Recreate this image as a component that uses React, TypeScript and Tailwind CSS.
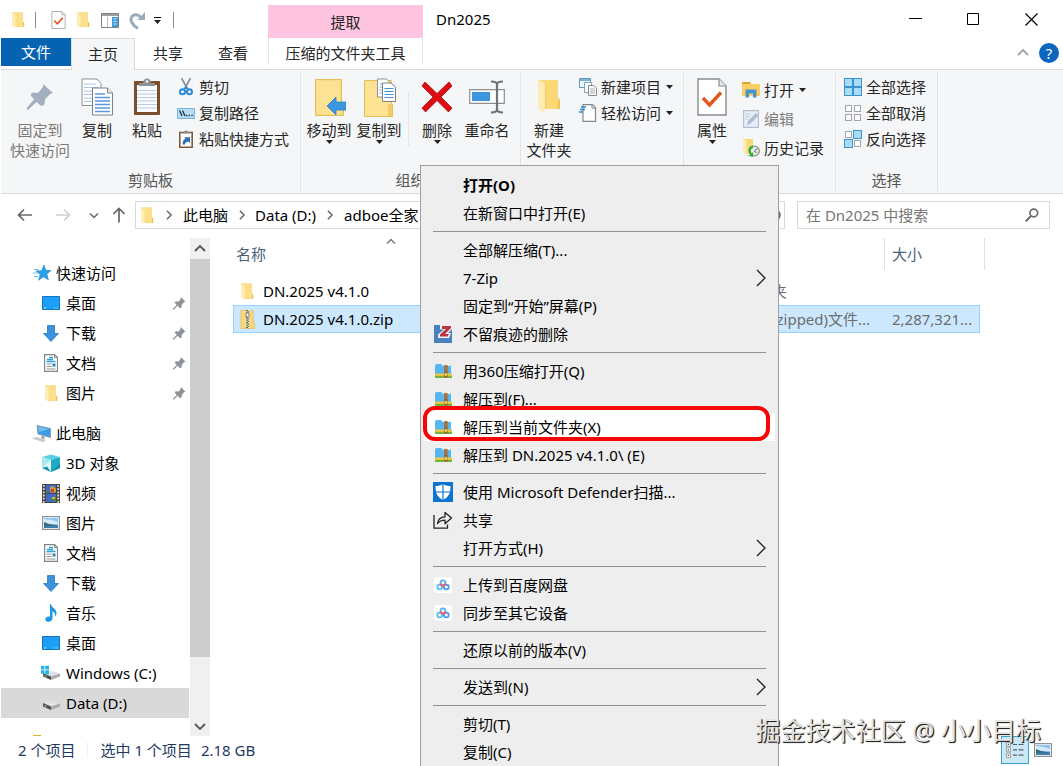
import type { ReactNode } from "react";

/* ---------- icons ---------- */

function Folder({ className }: { className: string }) {
  return (
    <svg viewBox="0 0 14 17" className={className} preserveAspectRatio="none" aria-hidden="true">
      <path d="M1 .5h11v10.5h1v5H4L1 14z" fill="#f6cf68" />
      <path d="M3 .8h9v10h1v5H4z" fill="#fbdf8b" />
      <path d="M1 .5l3.600 2.400V17L1 14z" fill="#fdeeb8" />
      <path d="M12 11h1.200v5H12z" fill="#eebf50" />
    </svg>
  );
}

function NewFolderBig() {
  return (
    <svg viewBox="0 0 24 36" className="h-9 w-6" aria-hidden="true">
      <path d="M1 1h20v20h2v9H7z" fill="#fad876" />
      <path d="M21 21l2-2v11h-3z" fill="#f0c659" />
      <path d="M1 1l7 3v31l-7-6z" fill="#feecb4" />
      <path d="M8 4h1v26H8z" fill="#f2cd6a" />
    </svg>
  );
}

function CheckPage({ className }: { className: string }) {
  return (
    <svg viewBox="0 0 30 38" className={className} aria-hidden="true">
      <path d="M1 1h21l7 7v29H1z" fill="#fff" stroke="#8a8d91" strokeWidth="1.400" />
      <path d="M22 1v7h7" fill="#e6e8ea" stroke="#8a8d91" strokeWidth="1.200" />
      <path d="M6 20l6.500 7L24 14.500" fill="none" stroke="#e2571e" strokeWidth="3.400" />
    </svg>
  );
}

function PaneIcon() {
  return (
    <svg viewBox="0 0 18 15" className="h-[15px] w-[18px]" aria-hidden="true">
      <path d="M.5.5h17v14H.5z" fill="#fff" stroke="#7b8085" />
      <path d="M1 1h16v2H1z" fill="#9aa0a6" />
      <path d="M11 4h6v10h-6z" fill="#3f9bdc" />
      <path d="M12.500 6h3M12.500 8.500h3M12.500 11h3" stroke="#d6ecfb" />
      <path d="M6.500 4v10" stroke="#b9bdc1" />
    </svg>
  );
}

function RedoIcon() {
  return (
    <svg viewBox="0 0 17 19" className="h-[19px] w-[17px]" aria-hidden="true">
      <path d="M9 17.500C3 14 .5 9 3 5.500 5 3 9.500 3 12.500 7" fill="none" stroke="#9aabbd" strokeWidth="3" />
      <path d="M16 1v8H8.500z" fill="#9aabbd" />
    </svg>
  );
}

function PinBig() {
  return (
    <svg viewBox="0 0 28 28" className="h-7 w-7" aria-hidden="true">
      <path d="M17 1l10 9-3 1-5 5.500-.5 5L15 23l-4.500-4L2 27l-1.500-.5 1-2.500L8 16.500 4.500 12l2-2.500 5.500.5 5-6z" fill="#a3afc1" />
    </svg>
  );
}

function PinSmall() {
  return (
    <svg viewBox="0 0 28 28" className="h-[13px] w-[13px]" aria-hidden="true">
      <path d="M17 0l10 10-3 1-5 5.500-.5 6L15 24l-5-5-8 8-2 0 0-2L8 17 3.500 12l2.500-3 6.500.5 4-5.500z" fill="#8d9398" />
    </svg>
  );
}

function CopyIcon() {
  return (
    <svg viewBox="0 0 32 38" className="h-[38px] w-8" aria-hidden="true">
      <path d="M1 1h15l4 4.500v22H1z" fill="#fff" stroke="#8e9196" />
      <path d="M3 6h12M3 9.500h14M3 13h14M3 16.500h14M3 20h14M3 23.500h14" stroke="#a9c6ea" />
      <path d="M11.500 10h15l5 5v22h-20z" fill="#fff" stroke="#7e8287" />
      <path d="M26.500 10v5h5" fill="#e4e6e8" stroke="#7e8287" />
      <path d="M14 16h10M14 19.500h15M14 23h15M14 26.500h15M14 30h15M14 33.500h15" stroke="#5b98de" strokeWidth="1.300" />
    </svg>
  );
}

function PasteIcon() {
  return (
    <svg viewBox="0 0 28 38" className="h-[38px] w-7" aria-hidden="true">
      <rect x="1" y="3" width="26" height="34" rx="1" fill="#7b4f2c" />
      <path d="M4 7h20v27H4z" fill="#fafcff" />
      <path d="M4 12.500h20M4 16h20M4 19.500h20M4 23h20M4 26.500h20M4 30h20" stroke="#b7cfe3" />
      <path d="M6 8V5h4c0-6 8-6 8 0h4v3z" fill="#8d9094" />
      <circle cx="14" cy="3.500" r="1.300" fill="#f5f6f7" />
    </svg>
  );
}

function ScissorsIcon() {
  return (
    <svg viewBox="0 0 14 18" className="h-[18px] w-[14px]" aria-hidden="true">
      <path d="M2.500 0l6 11M11.500 0l-6 11" stroke="#8a8f94" strokeWidth="1.600" />
      <circle cx="3.500" cy="13.800" r="2.500" fill="none" stroke="#2a8ad6" strokeWidth="2" />
      <circle cx="10.500" cy="13.800" r="2.500" fill="none" stroke="#2a8ad6" strokeWidth="2" />
      <path d="M5 11.500l2-2.500 2 2.500" fill="none" stroke="#2a8ad6" strokeWidth="1.600" />
    </svg>
  );
}

function PathIcon() {
  return (
    <svg viewBox="0 0 18 11" className="h-[11px] w-[18px]" aria-hidden="true">
      <path d="M.5.5h17v10H.5z" fill="#b9dcf5" stroke="#7db4df" />
      <path d="M2.500 2.500l2.500 5.500M5.500 2.500L8 8" stroke="#16324a" strokeWidth="1.300" />
      <path d="M9 7.500h1.300M11.700 7.500H13M14.400 7.500h1.300" stroke="#16324a" strokeWidth="1.400" />
    </svg>
  );
}

function PasteShortcutIcon() {
  return (
    <svg viewBox="0 0 14 18" className="h-[18px] w-[14px]" aria-hidden="true">
      <path d="M.8 2.500h12.400v14.700H.8z" fill="#fff" stroke="#80583a" strokeWidth="1.600" />
      <path d="M4 3.500C4-.5 10-.5 10 3.500z" fill="#8d9094" />
      <path d="M3.500 14.500c0-3 1-5 3-5.700L5 7.300h6v6l-1.700-1.700c-2 .4-3.300 1.200-3.300 2.900z" fill="#2d6fb9" />
    </svg>
  );
}

function MoveToIcon() {
  return (
    <svg viewBox="0 0 34 38" className="h-[38px] w-[34px]" aria-hidden="true">
      <path d="M3.500 1.500h26v24h2v12h-28z" fill="#f9dc81" stroke="#e3bf58" />
      <path d="M5 3h23v33H5z" fill="#fce292" />
      <path d="M15 28l9-9v5h10v8H24v5z" fill="#3b98e0" stroke="#2a80c5" strokeWidth=".8" />
    </svg>
  );
}

function CopyToIcon() {
  return (
    <svg viewBox="0 0 34 39" className="h-[39px] w-[34px]" aria-hidden="true">
      <path d="M2.500 2.500h27v24h1v12h-28z" fill="#fce292" stroke="#e3bf58" />
      <path d="M26 26h4v12h-4z" fill="#f3cb63" />
      <path d="M15.500 1h9l3 3v15h-12z" fill="#fff" stroke="#8e9196" />
      <path d="M17.500 6h8M17.500 9h8M17.500 12h8M17.500 15h8" stroke="#7fb0e6" />
      <path d="M20.500 5h8.500l4.500 4v14.500h-13z" fill="#fff" stroke="#7e8287" />
      <path d="M22.500 10.500h9M22.500 13.500h9M22.500 16.500h9M22.500 19.500h9" stroke="#4a8fda" />
    </svg>
  );
}

function DeleteIcon() {
  return (
    <svg viewBox="0 0 32 32" className="h-8 w-8" aria-hidden="true">
      <path d="M4 1l12 11.500L28 1l3 4-11 11 11 11-3.500 4L16 19.500 4.500 31 1 27l11-11L1 5z" fill="#dc0c14" stroke="#b50a10" strokeWidth=".8" />
    </svg>
  );
}

function RenameIcon() {
  return (
    <svg viewBox="0 0 36 34" className="h-[34px] w-9" aria-hidden="true">
      <path d="M.7 9.700h34.600v13.600H.7z" fill="#fff" stroke="#8b8e92" strokeWidth="1.200" />
      <path d="M3 12h18v9H3z" fill="#3a97df" />
      <path d="M22 1.500c4 0 6 1 6 3v25c0 2-2 3-6 3M34 1.500c-4 0-6 1-6 3M28 29.500c0 2 2 3 6 3" fill="none" stroke="#6f7275" strokeWidth="2.200" />
    </svg>
  );
}

function NewItemIcon() {
  return (
    <svg viewBox="0 0 18 18" className="h-[18px] w-[18px]" aria-hidden="true">
      <path d="M.5.5h11v9H.5z" fill="#e8f3fb" stroke="#5b9bc0" />
      <path d="M.5 2h11" stroke="#5b9bc0" strokeWidth="1.500" />
      <path d="M5.500 4.500h7v10h-7z" fill="#f7fbfd" stroke="#8aa2b2" />
      <path d="M9.500 7.500h5l3 2.500v7.500h-8z" fill="#fff" stroke="#85898d" />
      <path d="M11 11h5M11 13h5M11 15h5" stroke="#a5a9ad" />
    </svg>
  );
}

function EasyAccessIcon() {
  return (
    <svg viewBox="0 0 18 18" className="h-[18px] w-[18px]" aria-hidden="true">
      <path d="M4 .7h9.500l3 3v13.600H4z" fill="#fff" stroke="#85898d" strokeWidth="1.200" />
      <path d="M13 .7v3.500h3.500" fill="none" stroke="#85898d" />
      <path d="M2 3h5M1 5.500h5M0 8h4" stroke="#2f88c9" strokeWidth="1.300" />
    </svg>
  );
}

function OpenIcon() {
  return (
    <svg viewBox="0 0 18 17" className="h-[17px] w-[18px]" aria-hidden="true">
      <path d="M0 1h8l1 2h9v12H0z" fill="#f7cf64" />
      <path d="M0 1h8l1 2H0z" fill="#dba52f" />
      <path d="M3.500 16.500V8.500h11v8h-3.500v-4h-4v4z" fill="#4b93cc" />
    </svg>
  );
}

function EditIcon() {
  return (
    <svg viewBox="0 0 16 18" className="h-[18px] w-4" aria-hidden="true">
      <path d="M.6.6h14.800v16.800H.6z" fill="#e6eff9" stroke="#b4bfce" strokeWidth="1.200" />
      <path d="M4 15l1-4L13 3l2.500 2.500-8 8z" fill="#aebccf" />
      <path d="M2.500 4h5M2.500 6.500h4M2.500 9h3" stroke="#bccadb" />
    </svg>
  );
}

function HistoryIcon() {
  return (
    <svg viewBox="0 0 17 18" className="h-[18px] w-[17px]" aria-hidden="true">
      <path d="M0 0h10v15H2L0 13z" fill="#f7d778" />
      <path d="M0 0l3.500 2v14L0 13z" fill="#fdeeb8" />
      <circle cx="11.500" cy="12" r="4.800" fill="#e5ebe5" stroke="#8a928a" strokeWidth="1.300" />
      <path d="M11.500 12l3-2.500M11.500 12l2 2" stroke="#596059" />
      <path d="M10 6.500C5 7 4 12 7.500 16l-3 .5 5.500 1.500V13l-1.300 1.500C7 12 7.500 9.500 10 9z" fill="#2fa836" />
    </svg>
  );
}

const squareSpots = [
  [0.5, 0.5],
  [9.5, 0.5],
  [0.5, 9.5],
  [9.5, 9.5],
];

function SquaresIcon({ filled }: { filled: boolean[] }) {
  return (
    <svg viewBox="0 0 18 18" className="h-[18px] w-[18px]" aria-hidden="true">
      {squareSpots.map(([x, y], i) =>
        filled[i] ? (
          <rect key={i} x={x} y={y} width="8" height="8" fill="#a9dcfa" stroke="#3b94cf" />
        ) : (
          <rect key={i} x={x + 1} y={y + 1} width="6" height="6" fill="#fdfdfd" stroke="#a2a6aa" />
        ),
      )}
    </svg>
  );
}

function Chevron({ dir, className }: { dir: "up" | "down" | "right"; className: string }) {
  const d = { up: "M1 7l5-5 5 5", down: "M1 3l5 5 5-5", right: "M3 1l5 5-5 5" }[dir];
  return (
    <svg viewBox={dir === "right" ? "0 0 11 12" : "0 0 12 10"} className={className} aria-hidden="true">
      <path d={d} fill="none" stroke="currentColor" strokeWidth="1.800" />
    </svg>
  );
}

function Caret() {
  return (
    <svg viewBox="0 0 7 4" className="h-1 w-[7px] shrink-0" aria-hidden="true">
      <path d="M0 0h7L3.500 4z" fill="#222" />
    </svg>
  );
}

function Arrow({ dir, className }: { dir: "left" | "right" | "up"; className: string }) {
  const d = {
    left: "M15 8H1.500M7 2.500L1.500 8 7 13.500",
    right: "M1 8h13.500M9 2.500l5.500 5.500L9 13.500",
    up: "M8 15.500V1.500M2.500 7L8 1.500 13.500 7",
  }[dir];
  return (
    <svg viewBox="0 0 16 16" className={className} aria-hidden="true">
      <path d={d} fill="none" stroke="currentColor" strokeWidth="1.700" />
    </svg>
  );
}

function StarIcon() {
  return (
    <svg viewBox="0 0 18 16" className="h-4 w-[18px]" aria-hidden="true">
      <path d="M11 0l1.800 5.200 5.200.3-4.200 3.500 1.600 5.800-4.900-3-5 3.500 1.800-5.800L3 6l5.500-.3z" fill="#29a3ee" stroke="#1b7fc4" strokeWidth=".6" />
      <path d="M1 4.500h5M0 8h5M1 11.500h4" stroke="#6fbdec" strokeWidth="1.200" />
    </svg>
  );
}

function DesktopIcon() {
  return (
    <svg viewBox="0 0 18 14" className="h-[14px] w-[18px]" aria-hidden="true">
      <path d="M.5.5h17v13H.5z" fill="#1b9ff7" stroke="#1675b8" />
      <path d="M2 12h2M12 12h1M14.500 12h1" stroke="#d9f0ff" />
    </svg>
  );
}

function DownloadIcon() {
  return (
    <svg viewBox="0 0 16 17" className="h-[17px] w-4" aria-hidden="true">
      <path d="M4.500.5h7v8h4L8 16.500.5 8.500h4z" fill="#3a93dc" stroke="#2877ba" strokeWidth=".8" />
    </svg>
  );
}

function DocIcon() {
  return (
    <svg viewBox="0 0 14 18" className="h-[18px] w-[14px]" aria-hidden="true">
      <path d="M.6.6h9.900l3 3v13.800H.6z" fill="#fff" stroke="#7f858a" strokeWidth="1.200" />
      <path d="M10.500.6v3h3" fill="none" stroke="#7f858a" />
      <path d="M5 3.500h4M3 5.500h6M2.500 7.500h9" stroke="#31a0d4" strokeWidth="1.400" />
      <path d="M2.500 10h5M2.500 12.500h5M2.500 15h9" stroke="#8d9499" />
      <path d="M8.500 9.500h3v3h-3z" fill="#2f83ad" />
    </svg>
  );
}

function PcIcon() {
  return (
    <svg viewBox="0 0 19 17" className="h-[17px] w-[19px]" aria-hidden="true">
      <path d="M5 .5l13.500 3v9L6 9z" fill="#3d9be3" stroke="#8398a8" strokeWidth=".9" />
      <path d="M6 1.500L17 4l-10 3z" fill="#70bcf2" />
      <path d="M10 11l3 1-1 2-3-1z" fill="#8e9499" />
      <path d="M0 13.500l4-1.500 10 3-3 2z" fill="#c5c9cc" />
    </svg>
  );
}

function CubeIcon() {
  return (
    <svg viewBox="0 0 18 18" className="h-[18px] w-[18px]" aria-hidden="true">
      <path d="M9 .5l9 2.500-9 3-9-3z" fill="#59cfe2" />
      <path d="M0 3l9 3v12l-9-4z" fill="#a8e8f0" />
      <path d="M18 3L9 6v12l9-4z" fill="#22a9c8" />
      <path d="M0 14l9-8v12z" fill="#dcf8fb" />
      <path d="M9 18l9-8v4z" fill="#1386ab" />
      <path d="M0 14l5-1.500L9 18z" fill="#178fa4" />
    </svg>
  );
}

function VideoIcon() {
  return (
    <svg viewBox="0 0 18 19" className="h-[19px] w-[18px]" aria-hidden="true">
      <path d="M0 0h18v19H0z" fill="#4b4540" />
      <path d="M1.800 1v18M16.200 1v18" stroke="#dcdcdc" strokeWidth="1.800" strokeDasharray="1.800 1.400" />
      <path d="M4 1h10v8H4zM4 10h10v8H4z" fill="#4469ce" />
      <path d="M8 3l3-1 3 3v3l-4 1-2-2z" fill="#d39c35" />
      <path d="M9 5h3v3H9z" fill="#cc402f" />
      <path d="M4 7l4 2H4zM9 15l5-3v5h-4z" fill="#3c8b3a" />
      <path d="M10 13h3v2h-3z" fill="#e3b13d" />
    </svg>
  );
}

function PictureIcon() {
  return (
    <svg viewBox="0 0 18 14" className="h-[14px] w-[18px]" aria-hidden="true">
      <path d="M.6.6h16.800v12.800H.6z" fill="#fff" stroke="#8d9398" strokeWidth="1.200" />
      <path d="M2 2h14v10H2z" fill="#8fc6f1" />
      <path d="M2 3l8 1 6 2v2H2z" fill="#d4eafa" />
      <path d="M2 6l5 2 9 1.500V12H2z" fill="#316e73" />
      <path d="M2 10l7-.5 7 .5v2H2z" fill="#3f7fb0" />
    </svg>
  );
}

function MusicIcon() {
  return (
    <svg viewBox="0 0 12 18" className="h-[18px] w-3" aria-hidden="true">
      <path d="M6 0c.5 4 5.500 4.500 5.500 9 0 2-1 3-1.500 3.500C10.500 9 9 8 7.500 7.500V14c0 2.500-2 3.800-4 3.800S.3 16.700.3 15.200c0-2 2.200-3.200 4.700-2.700V0z" fill="#1f97e4" />
    </svg>
  );
}

function DriveIcon({ windows }: { windows?: boolean }) {
  return (
    <svg viewBox="0 0 20 16" className="h-4 w-5" aria-hidden="true">
      <path d="M2 8l9-2 8 2.500-9 3z" fill="#e0e2e3" />
      <path d="M2 8l8 3.500V15l-8-3.500z" fill="#4c4f51" />
      <path d="M10 11.500l9-3v3L10 15z" fill="#a8abad" />
      <path d="M3.500 10.500l2 1" stroke="#9fe6a3" />
      {windows && <path d="M0 1h3.500v3.500H0zM4.300.8H8v3.700H4.300zM0 5.300h3.500V9L0 8.500zM4.300 5.300H8v4l-3.700-.4z" fill="#22b3ea" />}
    </svg>
  );
}

function ZipFolderIcon() {
  return (
    <svg viewBox="0 0 15 19" className="h-[19px] w-[15px]" aria-hidden="true">
      <path d="M1 .5h12v11h1.500v7H1z" fill="#f9d977" stroke="#e0b74e" strokeWidth=".6" />
      <path d="M7.500 0v18" stroke="#e9e9e9" strokeWidth="3" />
      <path d="M7 0v18" stroke="#6d6a62" strokeWidth="2" strokeDasharray="1.200 1.200" />
      <path d="M8.300 1.200v17" stroke="#6d6a62" strokeWidth="1.500" strokeDasharray="1.200 1.200" />
      <path d="M6 3h3v4H6z" fill="#ececec" stroke="#555" strokeWidth=".6" />
    </svg>
  );
}

function Zip360Icon() {
  return (
    <svg viewBox="0 0 17 14" className="h-[14px] w-[17px]" aria-hidden="true">
      <path d="M0 1.500L1 0h5l2 2h7l1-1v9H0z" fill="#58b7f2" />
      <path d="M0 9.500h17V12H0z" fill="#f5c745" />
      <path d="M0 11.800h17V14H0z" fill="#78b23c" />
      <path d="M9.300 1h3.200v12.500H9.300z" fill="#a05c20" />
      <path d="M10.300 2h1.300M10.300 4h1.300M10.300 6h1.300" stroke="#d39c56" />
      <circle cx="10.900" cy="10.500" r="1.700" fill="#ffe56b" stroke="#8b5a22" strokeWidth=".5" />
    </svg>
  );
}

function ShredIcon() {
  return (
    <svg viewBox="0 0 18 18" className="h-[18px] w-[18px]" aria-hidden="true">
      <path d="M0 0h18v18H0z" fill="#4a80bd" />
      <path d="M6 0h12v4l-4 4h3l-2 5H4V9.500l6-5H6z" fill="#f3eff2" />
      <path d="M8 1h9v2l-6 6h4l-1.500 2.500H6v-2L12 4H8z" fill="#b9363e" />
    </svg>
  );
}

function ShieldIcon() {
  return (
    <svg viewBox="0 0 20 20" className="h-5 w-5" aria-hidden="true">
      <path d="M0 0h20v20H0z" fill="#0a74d0" />
      <path d="M10 2C8 3.500 5 4 2.500 4c0 7 1.500 11 7.500 14 6-3 7.500-7 7.500-14C15 4 12 3.500 10 2z" fill="#fff" />
      <path d="M10 2v16M2 10h16" stroke="#0a74d0" strokeWidth="1.200" />
    </svg>
  );
}

function ShareIcon() {
  return (
    <svg viewBox="0 0 20 18" className="h-[18px] w-5" aria-hidden="true">
      <path d="M1 4v13.200h13.500v-3.700" fill="none" stroke="#222" strokeWidth="1.300" />
      <path d="M4.500 12.500c.5-4.500 3.500-6.500 7.500-6.700V1.500L18.500 7 12 12.800V9.200c-3 0-5.500.8-7.500 3.300z" fill="none" stroke="#222" strokeWidth="1.300" strokeLinejoin="round" />
    </svg>
  );
}

function NetdiskIcon() {
  return (
    <svg viewBox="0 0 18 16" className="h-4 w-[18px]" aria-hidden="true">
      <rect width="18" height="16" rx="3" fill="#fff" />
      <circle cx="9" cy="5.800" r="2.500" fill="none" stroke="#58b2f7" strokeWidth="1.800" />
      <circle cx="5.700" cy="10" r="2.400" fill="none" stroke="#4fc0f3" strokeWidth="1.800" />
      <circle cx="12.300" cy="10" r="2.400" fill="none" stroke="#4b98f2" strokeWidth="1.800" />
      <path d="M6.600 6.500C7 9.200 11 9.200 11.400 6.500" fill="none" stroke="#ee6074" strokeWidth="2" />
    </svg>
  );
}

function RefreshIcon() {
  return (
    <svg viewBox="0 0 14 14" className="h-[14px] w-[14px]" aria-hidden="true">
      <path d="M9 2.200a5.300 5.300 0 1 1-5 .2" fill="none" stroke="#6a6a6a" strokeWidth="1.700" />
      <path d="M9 0v5H4.500z" fill="#6a6a6a" />
    </svg>
  );
}

function DetailsIcon() {
  return (
    <svg viewBox="0 0 18 16" className="h-4 w-[18px]" aria-hidden="true">
      <path d="M.5.5h4v4h-4zM.5 5.800h4v4h-4zM.5 11h4v4.500h-4z" fill="#fff" stroke="#8b8f92" strokeWidth=".8" />
      <path d="M1.700 2.500h1.500M1.700 7.800h1.500" stroke="#4b5c4b" strokeWidth="1.300" />
      <path d="M1.700 13.200h1.500" stroke="#b63224" strokeWidth="1.300" />
      <path d="M7 2.500h4M12.500 2.500h5M7 7.800h4M12.500 7.800h5M7 13.200h4M12.500 13.200h5" stroke="#55616a" strokeWidth="1.200" />
    </svg>
  );
}

/* ---------- ribbon ---------- */

function BigButton({
  icon,
  lines,
  caret,
  muted,
  wide,
}: {
  icon: ReactNode;
  lines: string[];
  caret?: boolean;
  muted?: boolean;
  wide?: boolean;
}) {
  return (
    <button
      type="button"
      className={`flex shrink-0 flex-col items-center pt-2 leading-5 ${wide ? "w-[70px]" : "w-[50px]"} ${muted ? "text-[#7b7b7b]" : ""}`}
    >
      <span className="mb-1 flex h-[38px] items-center justify-center">{icon}</span>
      {lines.map((line) => (
        <span key={line} className="whitespace-nowrap">
          {line}
        </span>
      ))}
      {caret && <Caret />}
    </button>
  );
}

function SmallButton({ icon, label, caret, muted, tall }: { icon: ReactNode; label: string; caret?: boolean; muted?: boolean; tall?: boolean }) {
  return (
    <button type="button" className={`flex items-center gap-1 whitespace-nowrap ${tall ? "h-[29px]" : "h-[26px]"} ${muted ? "text-[#7b7b7b]" : ""}`}>
      <span className="flex w-[18px] justify-center">{icon}</span>
      <span>{label}</span>
      {caret && (
        <span className="pl-px">
          <Caret />
        </span>
      )}
    </button>
  );
}

function Group({ label, width, children }: { label?: string; width: string; children: ReactNode }) {
  return (
    <section className={`my-0.5 flex shrink-0 flex-col border-r border-[#e2e3e4] ${width}`}>
      <div className="-mt-0.5 flex flex-1">{children}</div>
      {label && <div className="mb-px text-center leading-5 text-[#555]">{label}</div>}
    </section>
  );
}

function Ribbon() {
  return (
    <div className="flex h-[125px] shrink-0 border-y border-[#dadbdc] bg-[#f5f6f7] text-[#262626]">
      <Group label="剪贴板" width="w-[300px]">
        <div className="flex pl-1">
          <BigButton icon={<PinBig />} lines={["固定到", "快速访问"]} muted wide />
          <div className="-ml-[3px] flex">
            <BigButton icon={<CopyIcon />} lines={["复制"]} />
            <BigButton icon={<PasteIcon />} lines={["粘贴"]} />
          </div>
          <div className="pl-[5px] pt-1">
            <SmallButton icon={<ScissorsIcon />} label="剪切" />
            <SmallButton icon={<PathIcon />} label="复制路径" />
            <SmallButton icon={<PasteShortcutIcon />} label="粘贴快捷方式" />
          </div>
        </div>
      </Group>
      <Group label="组织" width="w-[220px]">
        <div className="flex pl-[3px]">
          <BigButton icon={<MoveToIcon />} lines={["移动到"]} caret />
          <BigButton icon={<CopyToIcon />} lines={["复制到"]} caret />
          <div className="ml-1 mr-[3px] mt-[22px] h-[54px] w-px bg-[#e2e3e4]" />
          <BigButton icon={<DeleteIcon />} lines={["删除"]} caret />
          <BigButton icon={<RenameIcon />} lines={["重命名"]} />
        </div>
      </Group>
      <Group width="w-[163px]">
        <div className="flex pl-[3px]">
          <BigButton icon={<NewFolderBig />} lines={["新建", "文件夹"]} />
          <div className="pl-[5px] pt-1">
            <SmallButton icon={<NewItemIcon />} label="新建项目" caret />
            <SmallButton icon={<EasyAccessIcon />} label="轻松访问" caret />
          </div>
        </div>
      </Group>
      <Group width="w-[152px]">
        <div className="flex pl-[3px]">
          <BigButton icon={<CheckPage className="h-[38px] w-[30px]" />} lines={["属性"]} caret />
          <div className="pl-[5px] pt-[5px]">
            <SmallButton icon={<OpenIcon />} label="打开" caret tall />
            <SmallButton icon={<EditIcon />} label="编辑" muted tall />
            <SmallButton icon={<HistoryIcon />} label="历史记录" tall />
          </div>
        </div>
      </Group>
      <Group label="选择" width="w-[102px]">
        <div className="pl-2 pt-1">
          <SmallButton icon={<SquaresIcon filled={[true, true, true, true]} />} label="全部选择" />
          <SmallButton icon={<SquaresIcon filled={[false, false, false, false]} />} label="全部取消" />
          <SmallButton icon={<SquaresIcon filled={[false, true, true, false]} />} label="反向选择" />
        </div>
      </Group>
    </div>
  );
}

/* ---------- header ---------- */

function Header() {
  return (
    <header className="flex h-[69px] shrink-0 text-[#262626]">
      <div className="flex w-[267px] shrink-0 flex-col">
        <div className="flex h-[38px] items-center pl-2.5 pt-0.5">
          <Folder className="h-4 w-[14px]" />
          <span className="ml-2.5 h-4 w-px bg-[#8a8a8a]" />
          <button type="button" aria-label="属性" className="ml-[15px]">
            <CheckPage className="h-[18px] w-[15px]" />
          </button>
          <button type="button" aria-label="新建文件夹" className="ml-2.5">
            <Folder className="h-4 w-[14px]" />
          </button>
          <button type="button" aria-label="导航窗格" className="ml-[11px]">
            <PaneIcon />
          </button>
          <button type="button" aria-label="重做" className="ml-2.5">
            <RedoIcon />
          </button>
          <button type="button" aria-label="自定义快速访问工具栏" className="ml-2 flex flex-col items-center gap-0.5">
            <span className="h-px w-[7px] bg-black" />
            <Caret />
          </button>
          <span className="ml-3 h-4 w-px bg-[#8a8a8a]" />
        </div>
        <nav className="flex flex-1">
          <button type="button" className="mb-[3px] w-[70px] bg-[#0563b1] text-white">
            文件
          </button>
          <button type="button" className="relative -mb-px w-16 border border-b-0 border-[#dadbdc] bg-[#f5f6f7] pb-0.5">
            主页
          </button>
          <button type="button" className="w-[66px] pb-0.5">
            共享
          </button>
          <button type="button" className="w-16 pb-0.5">
            查看
          </button>
        </nav>
      </div>
      <div className="flex w-[155px] shrink-0 flex-col pt-[5px]">
        <div className="flex h-[33px] shrink-0 items-center justify-center bg-[#fec4e0]">提取</div>
        <button type="button" className="mb-1 flex-1 border-x border-[#e4e4e4] pt-[3px]">
          压缩的文件夹工具
        </button>
      </div>
      <div className="flex flex-1 flex-col">
        <div className="flex h-[38px] items-center pl-[13px]">
          <h1 className="flex-1 text-black">Dn2025</h1>
          <div className="flex gap-[45px] pr-[25px] text-black">
            <button type="button" aria-label="最小化">
              <svg viewBox="0 0 13 13" className="h-[13px] w-[13px]" aria-hidden="true">
                <path d="M0 5.500h13" stroke="currentColor" />
              </svg>
            </button>
            <button type="button" aria-label="最大化">
              <svg viewBox="0 0 13 13" className="h-[13px] w-[13px]" aria-hidden="true">
                <path d="M.5.5h11v11H.5z" fill="none" stroke="currentColor" />
              </svg>
            </button>
            <button type="button" aria-label="关闭">
              <svg viewBox="0 0 13 13" className="h-[13px] w-[13px]" aria-hidden="true">
                <path d="M.5.5l12 12M12.500.5l-12 12" stroke="currentColor" strokeWidth="1.200" />
              </svg>
            </button>
          </div>
        </div>
        <div className="flex flex-1 items-center justify-end gap-2.5 pb-0.5 pr-1">
          <button type="button" aria-label="折叠功能区" className="text-[#a3a3a3]">
            <Chevron dir="up" className="h-2.5 w-3" />
          </button>
          <button type="button" aria-label="帮助" className="flex h-5 w-5 items-center justify-center rounded-full bg-[#0b66c0] text-[15px] text-white">
            ?
          </button>
        </div>
      </div>
    </header>
  );
}

function AddressBar() {
  return (
    <div className="flex h-11 shrink-0 items-center pb-0.5 pr-[13px] text-black">
      <div className="flex w-[134px] shrink-0 items-center pl-4 text-[#666]">
        <button type="button" aria-label="后退">
          <Arrow dir="left" className="h-4 w-4" />
        </button>
        <button type="button" aria-label="前进" className="ml-[22px] text-[#d0d0d0]">
          <Arrow dir="right" className="h-4 w-4" />
        </button>
        <button type="button" aria-label="最近的位置" className="ml-[18px]">
          <Chevron dir="down" className="h-2 w-2.5" />
        </button>
        <button type="button" aria-label="上移" className="ml-3">
          <Arrow dir="up" className="h-4 w-4" />
        </button>
      </div>
      <div className="flex h-7 flex-1 items-center whitespace-nowrap border border-[#d9d9d9] pl-1">
        <Folder className="h-[17px] w-[14px]" />
        <Chevron dir="right" className="ml-2.5 h-2.5 w-2.5 text-[#6a6a6a]" />
        <a href="#pc" className="ml-[9px]">
          此电脑
        </a>
        <Chevron dir="right" className="ml-[9px] h-2.5 w-2.5 text-[#6a6a6a]" />
        <a href="#data" className="ml-2">
          Data (D:)
        </a>
        <Chevron dir="right" className="ml-[9px] h-2.5 w-2.5 text-[#6a6a6a]" />
        <a href="#adboe" className="ml-[9px]">
          adboe全家
        </a>
        <button type="button" aria-label="刷新" className="ml-auto mr-0.5">
          <RefreshIcon />
        </button>
      </div>
      <label className="ml-3 flex h-7 w-[253px] shrink-0 items-center border border-[#d9d9d9] pl-2 pr-2.5">
        <input type="search" aria-label="搜索" placeholder="在 Dn2025 中搜索" className="min-w-0 flex-1 outline-none placeholder:text-[#767676]" />
        <svg viewBox="0 0 14 14" className="h-[14px] w-[14px]" aria-hidden="true">
          <circle cx="8.800" cy="5" r="3.900" fill="none" stroke="#6a6a6a" strokeWidth="1.700" />
          <path d="M6 8L.8 13.200" stroke="#6a6a6a" strokeWidth="2" />
        </svg>
      </label>
    </div>
  );
}

/* ---------- sidebar ---------- */

type NavItem = { icon: ReactNode; label: string; pinned?: boolean; active?: boolean };

const quickAccess: NavItem[] = [
  { icon: <DesktopIcon />, label: "桌面", pinned: true },
  { icon: <DownloadIcon />, label: "下载", pinned: true },
  { icon: <DocIcon />, label: "文档", pinned: true },
  { icon: <Folder className="h-[17px] w-[14px]" />, label: "图片", pinned: true },
];

const thisPc: NavItem[] = [
  { icon: <CubeIcon />, label: "3D 对象" },
  { icon: <VideoIcon />, label: "视频" },
  { icon: <PictureIcon />, label: "图片" },
  { icon: <DocIcon />, label: "文档" },
  { icon: <DownloadIcon />, label: "下载" },
  { icon: <MusicIcon />, label: "音乐" },
  { icon: <DesktopIcon />, label: "桌面" },
  { icon: <DriveIcon windows />, label: "Windows (C:)" },
  { icon: <DriveIcon />, label: "Data (D:)", active: true },
];

function NavSection({ icon, title, items }: { icon: ReactNode; title: string; items: NavItem[] }) {
  return (
    <section className="mb-2.5">
      <a href="#top" className="flex h-[30px] items-center gap-[5px] pl-[31px]">
        <span className="flex w-[19px] justify-center">{icon}</span>
        {title}
      </a>
      {items.map((item) => (
        <a key={item.label} href="#item" className={`mr-px flex h-[30px] items-center gap-[5px] pl-[39px] pr-[3px] ${item.active ? "bg-[#d9d9d9]" : ""}`}>
          <span className="flex w-[21px] justify-center">{item.icon}</span>
          <span className="flex-1">{item.label}</span>
          {item.pinned && <PinSmall />}
        </a>
      ))}
    </section>
  );
}

function Sidebar() {
  return (
    <aside className="flex w-[209px] shrink-0 overflow-hidden text-black">
      <nav className="flex-1 pt-5">
        <NavSection icon={<StarIcon />} title="快速访问" items={quickAccess} />
        <NavSection icon={<PcIcon />} title="此电脑" items={thisPc} />
        <div className="ml-8 mt-[17px] h-4 w-2 bg-[#d9b21c]" />
      </nav>
      <div className="flex w-5 flex-col items-center bg-[#f0f0f0] text-[#555]">
        <span className="flex h-[21px] items-center">
          <Chevron dir="up" className="h-2.5 w-3" />
        </span>
        <span className="h-[398px] w-full bg-[#cdcdcd]" />
        <span className="mt-auto flex h-[21px] items-center">
          <Chevron dir="down" className="h-2.5 w-3" />
        </span>
      </div>
    </aside>
  );
}

/* ---------- file list ---------- */

function FileList() {
  return (
    <main className="relative min-w-0 flex-1 overflow-hidden pl-[23px]">
      <table className="w-[752px] table-fixed border-separate border-spacing-0 whitespace-nowrap text-left">
        <colgroup>
          <col className="w-[502px]" />
          <col className="w-[150px]" />
          <col className="w-[95px]" />
          <col className="w-[5px]" />
        </colgroup>
        <thead className="text-[#4c607a]">
          <tr className="h-8">
            <th className="relative p-0 pl-[3px] font-normal">
              名称
              <Chevron dir="up" className="absolute left-[153px] top-0 h-2 w-2.5 text-[#777]" />
            </th>
            <th aria-label="类型" className="border-r border-[#e0e0e0] p-0" />
            <th className="p-0 pl-[7px] font-normal">大小</th>
            <th aria-hidden="true" className="border-r border-[#e0e0e0] p-0" />
          </tr>
        </thead>
        <tbody>
          <tr aria-hidden="true" className="h-[7px]">
            <td className="p-0" />
          </tr>
          <tr className="h-7">
            <td className="p-0 pl-[7px]">
              <span className="flex items-center gap-[9px] text-black">
                <Folder className="h-[17px] w-[14px]" />
                DN.2025 v4.1.0
              </span>
            </td>
            <td className="p-0 pl-[7px] text-[#6d6d6d]">文件夹</td>
            <td className="p-0" />
          </tr>
          <tr className="h-7">
            <td className="border-y border-l border-[#99d1ff] bg-[#cce8ff] p-0 pl-1.5">
              <span className="flex items-center gap-2 text-black">
                <ZipFolderIcon />
                DN.2025 v4.1.0.zip
              </span>
            </td>
            <td className="border-y border-[#99d1ff] bg-[#cce8ff] p-0 pl-[7px] text-[#6d6d6d]">压缩(zipped)文件...</td>
            <td className="border-y border-r border-[#99d1ff] bg-[#cce8ff] p-0 pl-[7px] text-[#6d6d6d]">2,287,321...</td>
          </tr>
        </tbody>
      </table>
    </main>
  );
}

function StatusBar() {
  return (
    <footer className="flex h-[30px] shrink-0 items-center pb-0.5 pl-[17px] pr-[11px] text-[#1f3a5f]">
      <span>2 个项目</span>
      <span className="ml-3 h-4 w-px bg-[#f0f0f0]" />
      <span className="ml-3">选中 1 个项目</span>
      <span className="ml-[9px]">2.18 GB</span>
      <div className="ml-auto flex items-center gap-[5px]">
        <button type="button" aria-label="详细信息" className="flex h-7 w-7 items-center justify-center border border-[#3ba2cf] bg-[#cbe8f6]">
          <DetailsIcon />
        </button>
        <button type="button" aria-label="大图标">
          <PictureIcon />
        </button>
      </div>
    </footer>
  );
}

/* ---------- context menu ---------- */

type MenuEntry = { label: string; icon?: ReactNode; bold?: boolean; submenu?: boolean; marked?: boolean };

const menu: MenuEntry[][] = [
  [{ label: "打开(O)", bold: true }, { label: "在新窗口中打开(E)" }],
  [
    { label: "全部解压缩(T)..." },
    { label: "7-Zip", submenu: true },
    { label: "固定到“开始”屏幕(P)" },
    { label: "不留痕迹的删除", icon: <ShredIcon /> },
  ],
  [
    { label: "用360压缩打开(Q)", icon: <Zip360Icon /> },
    { label: "解压到(F)...", icon: <Zip360Icon /> },
    { label: "解压到当前文件夹(X)", icon: <Zip360Icon />, marked: true },
    { label: "解压到 DN.2025 v4.1.0\\ (E)", icon: <Zip360Icon /> },
  ],
  [
    { label: "使用 Microsoft Defender扫描...", icon: <ShieldIcon /> },
    { label: "共享", icon: <ShareIcon /> },
    { label: "打开方式(H)", submenu: true },
  ],
  [
    { label: "上传到百度网盘", icon: <NetdiskIcon /> },
    { label: "同步至其它设备", icon: <NetdiskIcon /> },
  ],
  [{ label: "还原以前的版本(V)" }],
  [{ label: "发送到(N)", submenu: true }],
  [{ label: "剪切(T)" }, { label: "复制(C)" }],
];

function ContextMenu() {
  return (
    <div role="menu" className="absolute left-[420px] top-[165px] w-[359px] border border-[#a0a0a0] bg-[#eeeeee] pt-[5px] text-black">
      {menu.map((section, i) => (
        <div key={i}>
          {i > 0 && (
            <div className="flex h-[9px] items-center px-3">
              <div className="h-px flex-1 bg-[#919191]" />
            </div>
          )}
          {section.map((entry) => (
            <div key={entry.label} className={entry.marked ? "relative mx-[3px] bg-white" : "mx-[3px]"}>
              {entry.marked && <span className="absolute -left-px -top-[7px] bottom-0 right-[5px] rounded-xl border-4 border-[#f80404] bg-white" />}
              <button type="button" role="menuitem" className="relative flex h-7 w-full items-center pl-2 text-left">
                <span className="flex w-[22px] justify-center">{entry.icon}</span>
                <span className={`ml-[9px] flex-1 ${entry.bold ? "font-bold" : ""}`}>{entry.label}</span>
                {entry.submenu && (
                  <svg viewBox="0 0 10 18" className="mr-[9px] h-[18px] w-2.5" aria-hidden="true">
                    <path d="M1 1l8 8-8 8" fill="none" stroke="#222" strokeWidth="1.300" />
                  </svg>
                )}
              </button>
            </div>
          ))}
        </div>
      ))}
    </div>
  );
}

export default function App() {
  return (
    <div className="relative flex h-screen flex-col overflow-hidden bg-white pl-px font-['Noto_Sans','Noto_Sans_CJK_SC',sans-serif] text-[15px] leading-5">
      <Header />
      <Ribbon />
      <AddressBar />
      <div className="flex min-h-0 flex-1">
        <Sidebar />
        <FileList />
      </div>
      <StatusBar />
      <ContextMenu />
      <p className="absolute bottom-[18px] right-[22px] whitespace-nowrap text-[25px] leading-9 text-[#e4e4e4] [text-shadow:1px_1px_1px_#222,1px_1px_0_#444]">
        掘金技术社区 @ 小小目标
      </p>
    </div>
  );
}
